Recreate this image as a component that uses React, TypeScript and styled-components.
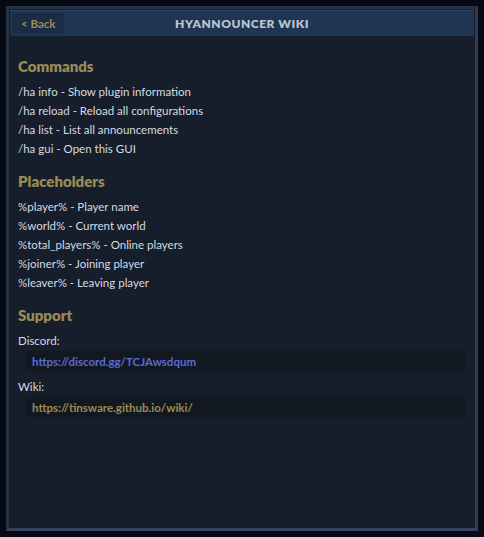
import React from "react";
import styled, { createGlobalStyle } from "styled-components";

const GlobalStyle = createGlobalStyle`
  html, body {
    margin: 0;
    padding: 0;
    background: #050a14;
    font-family: Lato, "Noto Sans", sans-serif;
  }
`;

const Page = styled.div`
  width: 484px;
  height: 537px;
  padding: 6px;
  box-sizing: border-box;
`;

const Frame = styled.div`
  height: 100%;
  box-sizing: border-box;
  border: 3px solid #2a3145;
  border-bottom-color: #3a4160;
  border-right-color: #323a52;
  background: #151e2a;
  display: flex;
  flex-direction: column;
`;

const Header = styled.div`
  position: relative;
  height: 25px;
  margin: 1px 1px 0;
  background: #1f3552;
  border-top: 1px solid #2c4465;
  display: flex;
  align-items: center;
  justify-content: center;
`;

const Title = styled.h1`
  margin: 0;
  font-size: 12px;
  font-weight: 800;
  letter-spacing: 0.5px;
  color: #b8c3d1;
`;

const BackButton = styled.button`
  position: absolute;
  left: 2px;
  top: 2px;
  height: 20px;
  padding: 0 9px;
  border: none;
  background: #1b2d45;
  color: #9a8a56;
  font-family: Lato, sans-serif;
  font-size: 11.5px;
  font-weight: 700;
  cursor: pointer;
`;

const Body = styled.div`
  padding: 20px 8px 0 9px;
  display: flex;
  flex-direction: column;
`;

const Heading = styled.h2`
  margin: 0 0 6px;
  font-size: 15px;
  font-weight: 800;
  color: #9a8a56;
  line-height: 20px;
`;

const Section = styled.section`
  margin-bottom: 13px;
`;

const Line = styled.div`
  font-size: 11.5px;
  line-height: 19px;
  color: #d6dbe2;
`;

const LinkBox = styled.div<{ $gold?: boolean }>`
  margin: 1px 0 6px 8px;
  width: 439px;
  height: 20px;
  background: #121820;
  display: flex;
  align-items: center;
  padding-left: 6px;
  box-sizing: border-box;
  font-size: 11.5px;
  font-weight: 700;
  color: ${(p) => (p.$gold ? "#9a8a56" : "#5b6ad6")};
`;

const commands = [
  "/ha info - Show plugin information",
  "/ha reload - Reload all configurations",
  "/ha list - List all announcements",
  "/ha gui - Open this GUI",
];

const placeholders = [
  "%player% - Player name",
  "%world% - Current world",
  "%total_players% - Online players",
  "%joiner% - Joining player",
  "%leaver% - Leaving player",
];

export default function App() {
  return (
    <Page>
      <GlobalStyle />
      <Frame>
        <Header>
          <BackButton>&lt; Back</BackButton>
          <Title>HYANNOUNCER WIKI</Title>
        </Header>
        <Body>
          <Section>
            <Heading>Commands</Heading>
            {commands.map((c) => (
              <Line key={c}>{c}</Line>
            ))}
          </Section>
          <Section>
            <Heading>Placeholders</Heading>
            {placeholders.map((p) => (
              <Line key={p}>{p}</Line>
            ))}
          </Section>
          <Section>
            <Heading>Support</Heading>
            <Line>Discord:</Line>
            <LinkBox>https://discord.gg/TCJAwsdqum</LinkBox>
            <Line>Wiki:</Line>
            <LinkBox $gold>https://tinsware.github.io/wiki/</LinkBox>
          </Section>
        </Body>
      </Frame>
    </Page>
  );
}
